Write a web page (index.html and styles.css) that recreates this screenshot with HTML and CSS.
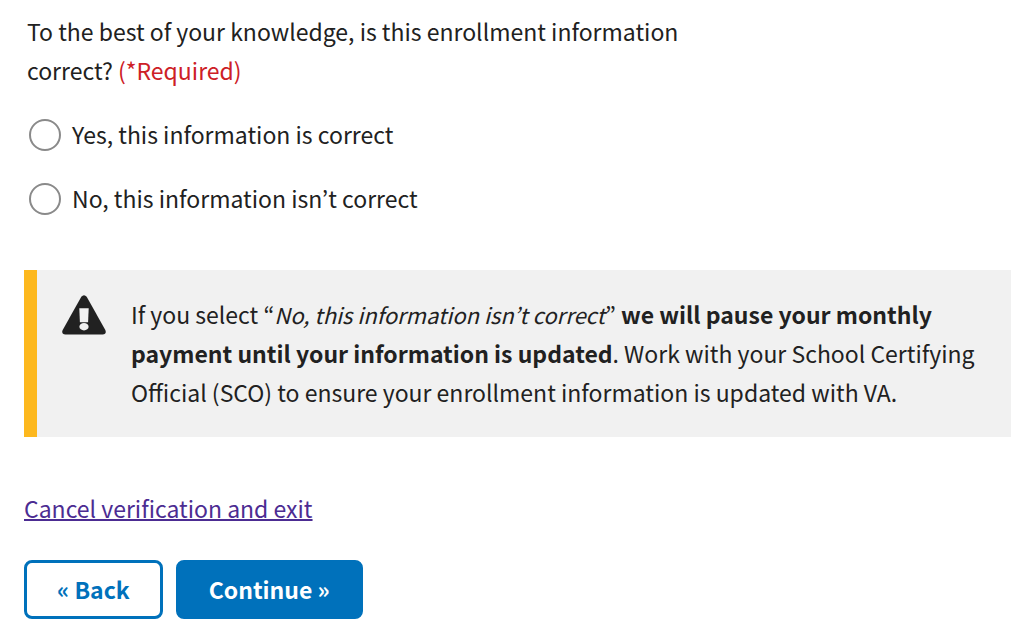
FILE: index.html
```html
<!DOCTYPE html>
<html lang="en">
<head>
<meta charset="utf-8">
<meta name="viewport" content="width=device-width, initial-scale=1">
<title>Verify your enrollment</title>
<link rel="stylesheet" href="styles.css">
</head>
<body>
<form class="verify">
  <fieldset class="question">
    <legend class="question-text">To the best of your knowledge, is this enrollment information correct? <span class="required">(*Required)</span></legend>
    <div class="options">
      <label class="option"><input class="radio" type="radio" name="correct" value="yes">Yes, this information is correct</label>
      <label class="option"><input class="radio" type="radio" name="correct" value="no">No, this information isn’t correct</label>
    </div>
  </fieldset>
  <div class="alert">
    <svg class="alert-icon" viewBox="0 0 44 40" aria-hidden="true">
      <path fill="#212121" d="M19.300 1.800Q22-1.200 24.700 1.800L43.300 35Q45 39 40.600 39.500H3.400Q-1 39 .7 35Z"/>
      <path fill="#f1f1f1" d="M17.300 13.300h9.400l-.6 14h-8.200Z"/>
      <ellipse cx="22" cy="31.700" rx="4.600" ry="3.700" fill="#f1f1f1"/>
    </svg>
    <p class="alert-text">If you select “<em class="quoted">No, this information isn’t correct</em>” <strong>we will pause your monthly payment until your information is updated</strong>. Work with your School Certifying Official (SCO) to ensure your enrollment information is updated with VA.</p>
  </div>
  <a class="cancel" href="#">Cancel verification and exit</a>
  <div class="actions">
    <button class="button button-outline" type="button">« Back</button>
    <button class="button" type="submit">Continue »</button>
  </div>
</form>
</body>
</html>
```
FILE: styles.css
```css
* {
  box-sizing: border-box;
}

body {
  margin: 0;
  background: #fff;
  color: #212121;
  font-family: "Source Sans Pro", "Noto Sans CJK KR", sans-serif;
  font-size: 23px;
  line-height: 39px;
}

.verify {
  display: flex;
  flex-direction: column;
  align-items: flex-start;
  padding: 12px 18px 24px 24px;
}

.question {
  margin: 0;
  padding: 0 0 0 3px;
  border: 0;
}

.question-text {
  max-width: 680px;
  padding: 0;
}

.required {
  color: #cd2026;
}

.options {
  display: flex;
  flex-direction: column;
  gap: 25px;
  padding: 25px 0 0 2px;
}

.option {
  display: flex;
  align-items: center;
  gap: 11px;
}

.radio {
  appearance: none;
  width: 32px;
  height: 32px;
  margin: 0;
  border: 2px solid #8a8a8a;
  border-radius: 50%;
  background: #fff;
}

.radio:checked {
  background: #0071bb;
  box-shadow: inset 0 0 0 5px #fff;
}

.alert {
  display: flex;
  align-items: flex-start;
  align-self: stretch;
  gap: 25px;
  margin-top: 52px;
  padding: 25px;
  border-left: 13px solid #fdb81e;
  background: #f1f1f1;
}

.alert-icon {
  flex: none;
  width: 44px;
  height: 40px;
}

.alert-text {
  margin: 0;
}

.quoted {
  font-size: 22px;
}

.cancel {
  margin-top: 52px;
  color: #4c2c92;
  text-decoration-thickness: 2px;
}

.actions {
  display: flex;
  gap: 13px;
  margin-top: 32px;
}

.button {
  padding: 7px 30px;
  border: 3px solid #0071bb;
  border-radius: 8px;
  background: #0071bb;
  color: #fff;
  font: inherit;
  font-weight: 700;
}

.button-outline {
  background: #fff;
  color: #0071bb;
}
```
